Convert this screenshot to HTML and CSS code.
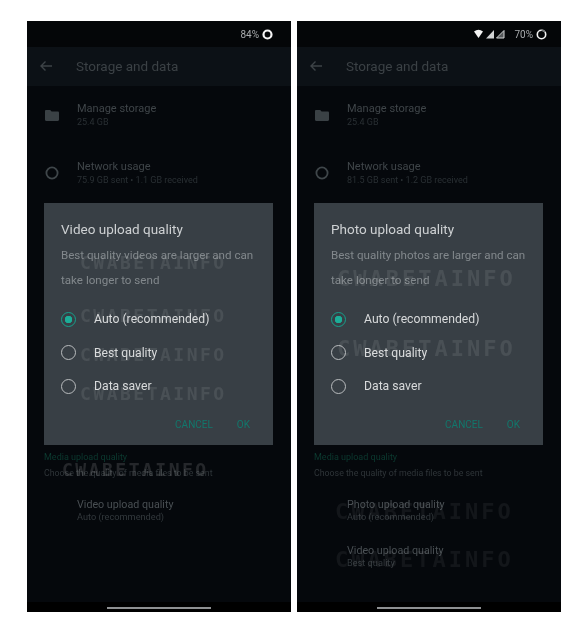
FILE: index.html
```html
<!DOCTYPE html>
<html lang="en">

<head>
    <meta charset="UTF-8" />
    <title>Media upload quality</title>
    <link rel="stylesheet" href="styles.css">
</head>

<body>

    <div class="shots">

        <!-- Left phone: video -->
        <div class="phone">
            <div class="status-bar">
                <span class="battery-text">84%</span>
                <svg class="battery" width="11" height="11" viewBox="0 0 11 11"><circle cx="5.5" cy="5.5" r="4" fill="none" stroke="#f4f4f4" stroke-width="2.2"/></svg>
            </div>
            <div class="app-bar">
                <svg class="back" width="14" height="12" viewBox="0 0 14 12"><path d="M13 6H2M6.5 1.5 2 6l4.5 4.5" fill="none" stroke="#3d4347" stroke-width="1.4"/></svg>
                <span class="app-title">Storage and data</span>
            </div>
            <div class="row row-first">
                <svg class="row-icon" width="14" height="11" viewBox="0 0 14 11"><path d="M0 1.2C0 .5.5 0 1.2 0h4l1.4 1.5h6.2c.7 0 1.2.5 1.2 1.2v7.1c0 .7-.5 1.2-1.2 1.2H1.2C.5 11 0 10.5 0 9.8z" fill="#3a4145"/></svg>
                <div class="row-text">
                    <div class="row-name">Manage storage</div>
                    <div class="row-sub">25.4 GB</div>
                </div>
            </div>
            <div class="row row-network">
                <svg class="row-icon" width="14" height="14" viewBox="0 0 14 14"><circle cx="7" cy="7" r="5.6" fill="none" stroke="#3f464a" stroke-width="1.8"/></svg>
                <div class="row-text">
                    <div class="row-name">Network usage</div>
                    <div class="row-sub">75.9 GB sent • 1.1 GB received</div>
                </div>
            </div>

            <div class="media-section">
                <div class="section-title">Media upload quality</div>
                <div class="section-sub">Choose the quality of media files to be sent</div>
            </div>
            <div class="quality-item">
                <div class="row-name">Video upload quality</div>
                <div class="row-sub">Auto (recommended)</div>
            </div>

            <div class="home-area"><div class="home-bar"></div></div>

            <div class="dialog">
                <div class="dialog-title">Video upload quality</div>
                <p class="dialog-body">Best quality videos are larger and can<br>take longer to send</p>
                <div class="options">
                    <div class="option"><span class="radio radio-on"></span>Auto (recommended)</div>
                    <div class="option"><span class="radio"></span>Best quality</div>
                    <div class="option"><span class="radio"></span>Data saver</div>
                </div>
                <div class="dialog-actions">
                    <span>CANCEL</span>
                    <span>OK</span>
                </div>
            </div>

            <div class="mark mark-small ml1">CWABETAINFO</div>
            <div class="mark mark-small ml2">CWABETAINFO</div>
            <div class="mark mark-small ml3">CWABETAINFO</div>
            <div class="mark mark-small ml4">CWABETAINFO</div>
            <div class="mark mark-small ml5">CWABETAINFO</div>
        </div>

        <!-- Right phone: photo -->
        <div class="phone">
            <div class="status-bar status-bar-wide">
                <svg class="signal" width="32" height="10" viewBox="0 0 32 10"><path d="M0 2.5Q4.5-.8 9 2.5L4.5 9z" fill="#f4f4f4"/><path d="M12 9.5 20 1v8.5z" fill="#d2d4d5"/><path d="M22.5 9 30 1.500V9z" fill="#55595b" stroke="#d2d4d5" stroke-width="1"/></svg>
                <span class="battery-text">70%</span>
                <svg class="battery" width="11" height="11" viewBox="0 0 11 11"><circle cx="5.5" cy="5.5" r="4.2" fill="none" stroke="#f4f4f4" stroke-width="1.6"/><path d="M5.5 1.3a4.2 4.2 0 0 1 3.4 1.8" fill="none" stroke="#777b7d" stroke-width="1.6"/></svg>
            </div>
            <div class="app-bar">
                <svg class="back" width="14" height="12" viewBox="0 0 14 12"><path d="M13 6H2M6.5 1.5 2 6l4.5 4.5" fill="none" stroke="#3d4347" stroke-width="1.4"/></svg>
                <span class="app-title">Storage and data</span>
            </div>
            <div class="row row-first">
                <svg class="row-icon" width="14" height="11" viewBox="0 0 14 11"><path d="M0 1.2C0 .5.5 0 1.2 0h4l1.4 1.5h6.2c.7 0 1.2.5 1.2 1.2v7.1c0 .7-.5 1.2-1.2 1.2H1.2C.5 11 0 10.5 0 9.8z" fill="#3a4145"/></svg>
                <div class="row-text">
                    <div class="row-name">Manage storage</div>
                    <div class="row-sub">25.4 GB</div>
                </div>
            </div>
            <div class="row row-network">
                <svg class="row-icon" width="14" height="14" viewBox="0 0 14 14"><circle cx="7" cy="7" r="5.6" fill="none" stroke="#3f464a" stroke-width="1.8"/></svg>
                <div class="row-text">
                    <div class="row-name">Network usage</div>
                    <div class="row-sub">81.5 GB sent • 1.2 GB received</div>
                </div>
            </div>

            <div class="media-section">
                <div class="section-title">Media upload quality</div>
                <div class="section-sub">Choose the quality of media files to be sent</div>
            </div>
            <div class="quality-item">
                <div class="row-name">Photo upload quality</div>
                <div class="row-sub">Auto (recommended)</div>
            </div>
            <div class="quality-item quality-next">
                <div class="row-name">Video upload quality</div>
                <div class="row-sub">Best quality</div>
            </div>

            <div class="home-area"><div class="home-bar"></div></div>

            <div class="dialog">
                <div class="dialog-title">Photo upload quality</div>
                <p class="dialog-body">Best quality photos are larger and can<br>take longer to send</p>
                <div class="options">
                    <div class="option"><span class="radio radio-on"></span>Auto (recommended)</div>
                    <div class="option"><span class="radio"></span>Best quality</div>
                    <div class="option"><span class="radio"></span>Data saver</div>
                </div>
                <div class="dialog-actions">
                    <span>CANCEL</span>
                    <span>OK</span>
                </div>
            </div>

            <div class="mark mr1">CWABETAINFO</div>
            <div class="mark mr2">CWABETAINFO</div>
            <div class="mark mark-dim mr3">CWABETAINFO</div>
            <div class="mark mark-dim mr4">CWABETAINFO</div>
        </div>

    </div>

</body>

</html>
```

FILE: styles.css
```css
body {
    margin: 0;
    background-color: #fff;
    font-family: Roboto, "Liberation Sans", sans-serif;
}

.shots {
    display: flex;
    gap: 6px;
    padding: 21px 0 0 27px;
}

/* Phone */
.phone {
    position: relative;
    display: flex;
    flex-direction: column;
    width: 264px;
    height: 591px;
    background-color: #05080c;
    overflow: hidden;
    filter: blur(0.6px);
}

.status-bar {
    display: flex;
    align-items: center;
    justify-content: flex-end;
    gap: 3px;
    height: 26px;
    padding-right: 18px;
    background-color: #040608;
}

.status-bar-wide {
    padding-right: 14px;
}

.battery-text {
    font-size: 10px;
    color: #a9acae;
}

.signal {
    margin-right: 5px;
}

.app-bar {
    display: flex;
    align-items: center;
    height: 37px;
    padding: 0 0 2px 12px;
    background-color: #0c1116;
}

.back {
    margin-right: 23px;
}

.app-title {
    font-size: 13.5px;
    color: #3b4145;
}

/* Rows */
.row {
    display: flex;
    align-items: center;
    padding-left: 18px;
}

.row-first {
    margin-top: 16px;
}

.row-network {
    margin-top: 32px;
}

.row-icon {
    margin-right: 18px;
}

.row-text {
    display: flex;
    flex-direction: column;
    gap: 1px;
}

.row-name {
    font-size: 11px;
    line-height: 13px;
    color: #3f4549;
}

.row-sub {
    font-size: 9px;
    line-height: 12px;
    color: #2a3034;
}

.media-section {
    margin-top: 265px;
    padding-left: 17px;
}

.section-title {
    font-size: 9px;
    line-height: 12px;
    color: #0c3a30;
}

.section-sub {
    margin-top: 4px;
    font-size: 8.8px;
    line-height: 12px;
    color: #2f3539;
}

.quality-item {
    margin-top: 19px;
    padding-left: 50px;
}

.quality-next {
    margin-top: 21px;
}

.quality-item .row-name {
    font-size: 10.7px;
    color: #494f53;
}

.quality-item .row-sub {
    font-size: 9.2px;
    color: #33393d;
}

.home-area {
    display: flex;
    align-items: center;
    justify-content: center;
    height: 10px;
    margin-top: auto;
    background-color: #000;
}

.home-bar {
    width: 104px;
    height: 2px;
    margin-top: 1px;
    background-color: #8e9092;
}

/* Dialog over the list */
.dialog {
    position: absolute;
    top: 182px;
    left: 17px;
    width: 229px;
    height: 242px;
    padding: 17px 12px 0 17px;
    box-sizing: border-box;
    background-color: #383f45;
}

.dialog-title {
    font-size: 13.5px;
    line-height: 18px;
    color: #ced1d3;
}

.dialog-body {
    margin: 5px 0 0;
    font-size: 11.6px;
    line-height: 25px;
    color: #82888c;
}

.options {
    display: flex;
    flex-direction: column;
    gap: 13.5px;
    margin-top: 16px;
}

.option {
    display: flex;
    align-items: center;
    height: 20px;
    font-size: 12.2px;
    color: #d8dadb;
}

.radio {
    flex: none;
    width: 15px;
    height: 15px;
    margin-right: 18px;
    border: 1.5px solid #b9bcbe;
    border-radius: 50%;
    box-sizing: border-box;
}

.radio-on {
    border-color: #16a08c;
    background: radial-gradient(circle, #1cae98 0 3.5px, transparent 4px);
}

.dialog-actions {
    display: flex;
    justify-content: flex-end;
    gap: 24px;
    margin-top: 23px;
    padding-right: 11px;
    font-size: 10px;
    color: #11786c;
}

/* Watermarks */
.mark {
    position: absolute;
    font-family: "DejaVu Sans Mono", monospace;
    font-weight: bold;
    font-size: 22px;
    line-height: 18px;
    letter-spacing: 3px;
    white-space: nowrap;
    color: rgba(255, 255, 255, 0.09);
}

.mark-small {
    font-size: 18px;
    letter-spacing: 2.5px;
}

.mark-dim {
    color: rgba(255, 255, 255, 0.06);
}

.ml1 { top: 233px; left: 53px; }
.ml2 { top: 286px; left: 53px; }
.ml3 { top: 325px; left: 53px; }
.ml4 { top: 364px; left: 53px; }
.ml5 { top: 440px; left: 35px; color: rgba(255, 255, 255, 0.13); }

.mr1 { top: 249px; left: 40px; }
.mr2 { top: 319px; left: 40px; }
.mr3 { top: 482px; left: 38px; }
.mr4 { top: 530px; left: 38px; }
```
